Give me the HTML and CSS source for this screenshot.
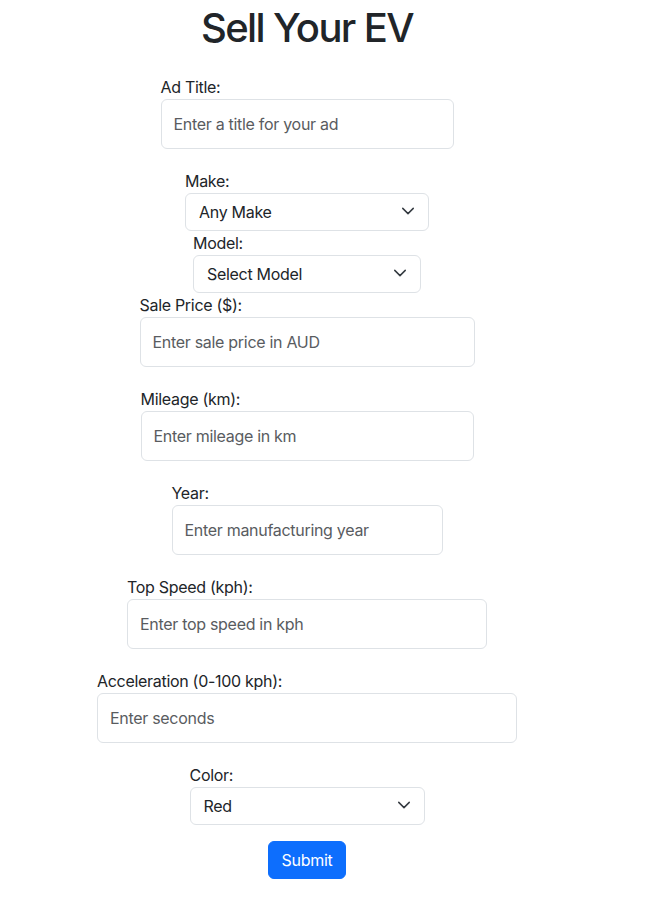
FILE: index.html
```html
<!DOCTYPE html>
<html lang="en">
<head>
<meta charset="utf-8">
<title>Sell Your EV</title>
<link rel="stylesheet" href="styles.css">
</head>
<body>
<main class="page">
  <h1 class="title">Sell Your EV</h1>
  <form class="form">
    <div class="group spaced w-title">
      <label class="label" for="title">Ad Title:</label>
      <input class="control" id="title" type="text" placeholder="Enter a title for your ad">
    </div>
    <div class="group w-make">
      <label class="label" for="make">Make:</label>
      <div class="select-wrap">
        <select class="select" id="make"><option>Any Make</option></select>
        <svg class="chev" viewBox="0 0 16 16" width="16" height="16" aria-hidden="true"><path d="m2 5 6 6 6-6" fill="none" stroke="#343a40" stroke-width="1.7" stroke-linecap="round" stroke-linejoin="round"/></svg>
      </div>
    </div>
    <div class="group w-model">
      <label class="label" for="model">Model:</label>
      <div class="select-wrap">
        <select class="select" id="model"><option>Select Model</option></select>
        <svg class="chev" viewBox="0 0 16 16" width="16" height="16" aria-hidden="true"><path d="m2 5 6 6 6-6" fill="none" stroke="#343a40" stroke-width="1.7" stroke-linecap="round" stroke-linejoin="round"/></svg>
      </div>
    </div>
    <div class="group spaced w-price">
      <label class="label" for="price">Sale Price ($):</label>
      <input class="control" id="price" type="text" placeholder="Enter sale price in AUD">
    </div>
    <div class="group spaced w-mileage">
      <label class="label" for="mileage">Mileage (km):</label>
      <input class="control" id="mileage" type="text" placeholder="Enter mileage in km">
    </div>
    <div class="group spaced w-year">
      <label class="label" for="year">Year:</label>
      <input class="control" id="year" type="text" placeholder="Enter manufacturing year">
    </div>
    <div class="group spaced w-speed">
      <label class="label" for="speed">Top Speed (kph):</label>
      <input class="control" id="speed" type="text" placeholder="Enter top speed in kph">
    </div>
    <div class="group spaced w-accel">
      <label class="label" for="accel">Acceleration (0-100 kph):</label>
      <input class="control" id="accel" type="text" placeholder="Enter seconds">
    </div>
    <div class="group w-color">
      <label class="label" for="color">Color:</label>
      <div class="select-wrap">
        <select class="select" id="color"><option>Red</option></select>
        <svg class="chev" viewBox="0 0 16 16" width="16" height="16" aria-hidden="true"><path d="m2 5 6 6 6-6" fill="none" stroke="#343a40" stroke-width="1.7" stroke-linecap="round" stroke-linejoin="round"/></svg>
      </div>
    </div>
    <button class="submit" type="button">Submit</button>
  </form>
</main>
</body>
</html>
```
FILE: styles.css
```css
* { box-sizing: border-box; }
html, body { margin: 0; padding: 0; background: #fff; }
body {
  font-family: Inter, "Noto Sans", "Liberation Sans", sans-serif;
  font-size: 16px;
  line-height: 24px;
  letter-spacing: -0.3px;
  color: #212529;
}
.page {
  width: 614px;
  display: flex;
  flex-direction: column;
  align-items: center;
  padding-top: 4px;
}
.title {
  margin: 0;
  font-size: 40px;
  line-height: 48px;
  font-weight: 500;
  letter-spacing: -1.6px;
}
.form {
  margin-top: 23px;
  display: flex;
  flex-direction: column;
  align-items: center;
}
.group {
  display: flex;
  flex-direction: column;
}
.group.spaced { margin-bottom: 20px; }
.label {
  display: block;
  height: 24px;
  font-size: 16px;
  line-height: 24px;
  color: #212529;
}
.control {
  display: block;
  width: 100%;
  height: 50px;
  padding: 12px;
  font: inherit;
  font-size: 16px;
  line-height: 24px;
  letter-spacing: -0.3px;
  color: #212529;
  background: #fff;
  border: 1px solid #dee2e6;
  border-radius: 6px;
  outline: none;
}
.control::placeholder { color: #595c5f; opacity: 1; }
.select-wrap { position: relative; }
.select {
  display: block;
  width: 100%;
  height: 38px;
  padding: 6px 36px 6px 13px;
  font: inherit;
  font-size: 16px;
  line-height: 24px;
  letter-spacing: -0.3px;
  color: #212529;
  background: #fff;
  border: 1px solid #dee2e6;
  border-radius: 6px;
  appearance: none;
  -webkit-appearance: none;
  outline: none;
}
.chev {
  position: absolute;
  right: 14px;
  top: 11px;
  width: 14px;
  height: 14px;
  pointer-events: none;
}
.w-title { width: 293px; }
.w-make { width: 244px; }
.w-model { width: 228px; }
.w-price { width: 335px; }
.w-mileage { width: 333px; }
.w-year { width: 271px; }
.w-speed { width: 360px; }
.w-accel { width: 420px; }
.w-color { width: 235px; }
.submit {
  margin-top: 16px;
  width: 78px;
  height: 38px;
  padding: 0 12px;
  font: inherit;
  font-size: 16px;
  line-height: 24px;
  letter-spacing: -0.3px;
  color: #fff;
  background: #0d6efd;
  border: 1px solid #0d6efd;
  border-radius: 6px;
}
```
